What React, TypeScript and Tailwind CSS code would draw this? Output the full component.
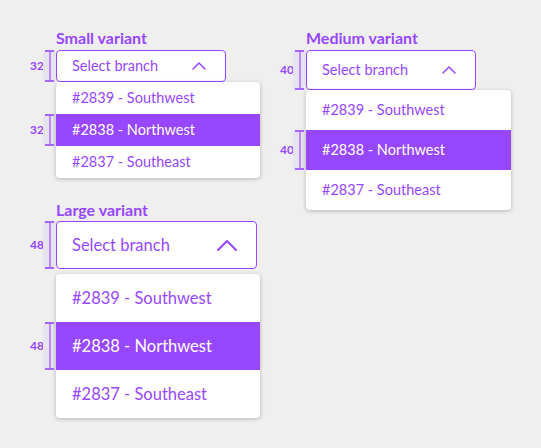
import React from "react";

const P = "#9747FF";

function Bracket({ label }: { label: string }) {
  return (
    <div className="flex h-full items-center">
      <div className="w-[14px] text-right text-[12px] font-bold leading-none text-[#9747FF]">{label}</div>
      <div className="ml-[-1px] flex h-full w-[13px] flex-col items-center bg-[#e7e3ee]">
        <div className="h-[2px] w-[9px] bg-[#a466ff]" />
        <div className="w-[2px] flex-1 bg-[#b98aff]" />
        <div className="h-[2px] w-[9px] bg-[#a466ff]" />
      </div>
    </div>
  );
}

function Chevron({ w, h, sw }: { w: number; h: number; sw: number }) {
  return (
    <svg width={w + 4} height={h + 4} viewBox={`-2 -2 ${w + 4} ${h + 4}`} fill="none">
      <path d={`M0 ${h} L${w / 2} 0 L${w} ${h}`} stroke={P} strokeWidth={sw} strokeLinecap="round" strokeLinejoin="round" />
    </svg>
  );
}

type V = {
  title: string;
  h: number;
  boxW: string;
  panelW: string;
  text: string;
  gap: string;
  chevron: React.ReactNode;
  labelMb: string;
};

function Variant({ v }: { v: V }) {
  const items = ["#2839 - Southwest", "#2838 - Northwest", "#2837 - Southeast"];
  return (
    <div className="flex flex-col">
      <div className={`ml-[26px] h-[20px] text-[16px] font-bold leading-[20px] text-[#9747FF] ${v.labelMb}`}>{v.title}</div>
      <div className="flex" style={{ height: v.h }}>
        <div className="w-[26px]">
          <Bracket label={String(v.h)} />
        </div>
        <div className={`flex items-center justify-between rounded-[4px] border border-[#9747FF] bg-white pl-[15px] pr-[18px] ${v.boxW} ${v.text} text-[#9747FF]`}>
          <span>Select branch</span>
          {v.chevron}
        </div>
      </div>
      <div className={`flex ${v.gap}`}>
        <div className="flex w-[26px] flex-col">
          <div style={{ height: v.h }} />
          <div style={{ height: v.h }}>
            <Bracket label={String(v.h)} />
          </div>
        </div>
        <div className={`flex flex-col rounded-[4px] bg-white shadow-[0_1px_4px_rgba(0,0,0,0.25)] ${v.panelW} ${v.text}`}>
          {items.map((it, i) => (
            <div
              key={it}
              style={{ height: v.h }}
              className={`flex items-center pl-[16px] ${i === 1 ? "bg-[#9747FF] text-white" : "text-[#9747FF]"}`}
            >
              {it}
            </div>
          ))}
        </div>
      </div>
    </div>
  );
}

export default function App() {
  const small: V = {
    title: "Small variant",
    h: 32,
    boxW: "w-[170px]",
    panelW: "w-[204px]",
    text: "text-[14.5px]",
    gap: "mt-0",
    chevron: <Chevron w={12} h={6} sw={1.5} />,
    labelMb: "mb-[2px]",
  };
  const medium: V = {
    title: "Medium variant",
    h: 40,
    boxW: "w-[170px]",
    panelW: "w-[205px]",
    text: "text-[14.5px]",
    gap: "mt-0",
    chevron: <Chevron w={12} h={6} sw={1.5} />,
    labelMb: "mb-[2px]",
  };
  const large: V = {
    title: "Large variant",
    h: 48,
    boxW: "w-[201px]",
    panelW: "w-[204px]",
    text: "text-[16.5px]",
    gap: "mt-[5px]",
    chevron: <Chevron w={18} h={9} sw={2} />,
    labelMb: "mb-[1px]",
  };
  return (
    <div className="h-[448px] w-[541px] overflow-hidden bg-[#efefef] font-['Lato',sans-serif]">
      <div className="flex pl-[30px] pt-[28px]">
        <div className="flex w-[250px] flex-col gap-[22px]">
          <Variant v={small} />
          <Variant v={large} />
        </div>
        <div>
          <Variant v={medium} />
        </div>
      </div>
    </div>
  );
}
